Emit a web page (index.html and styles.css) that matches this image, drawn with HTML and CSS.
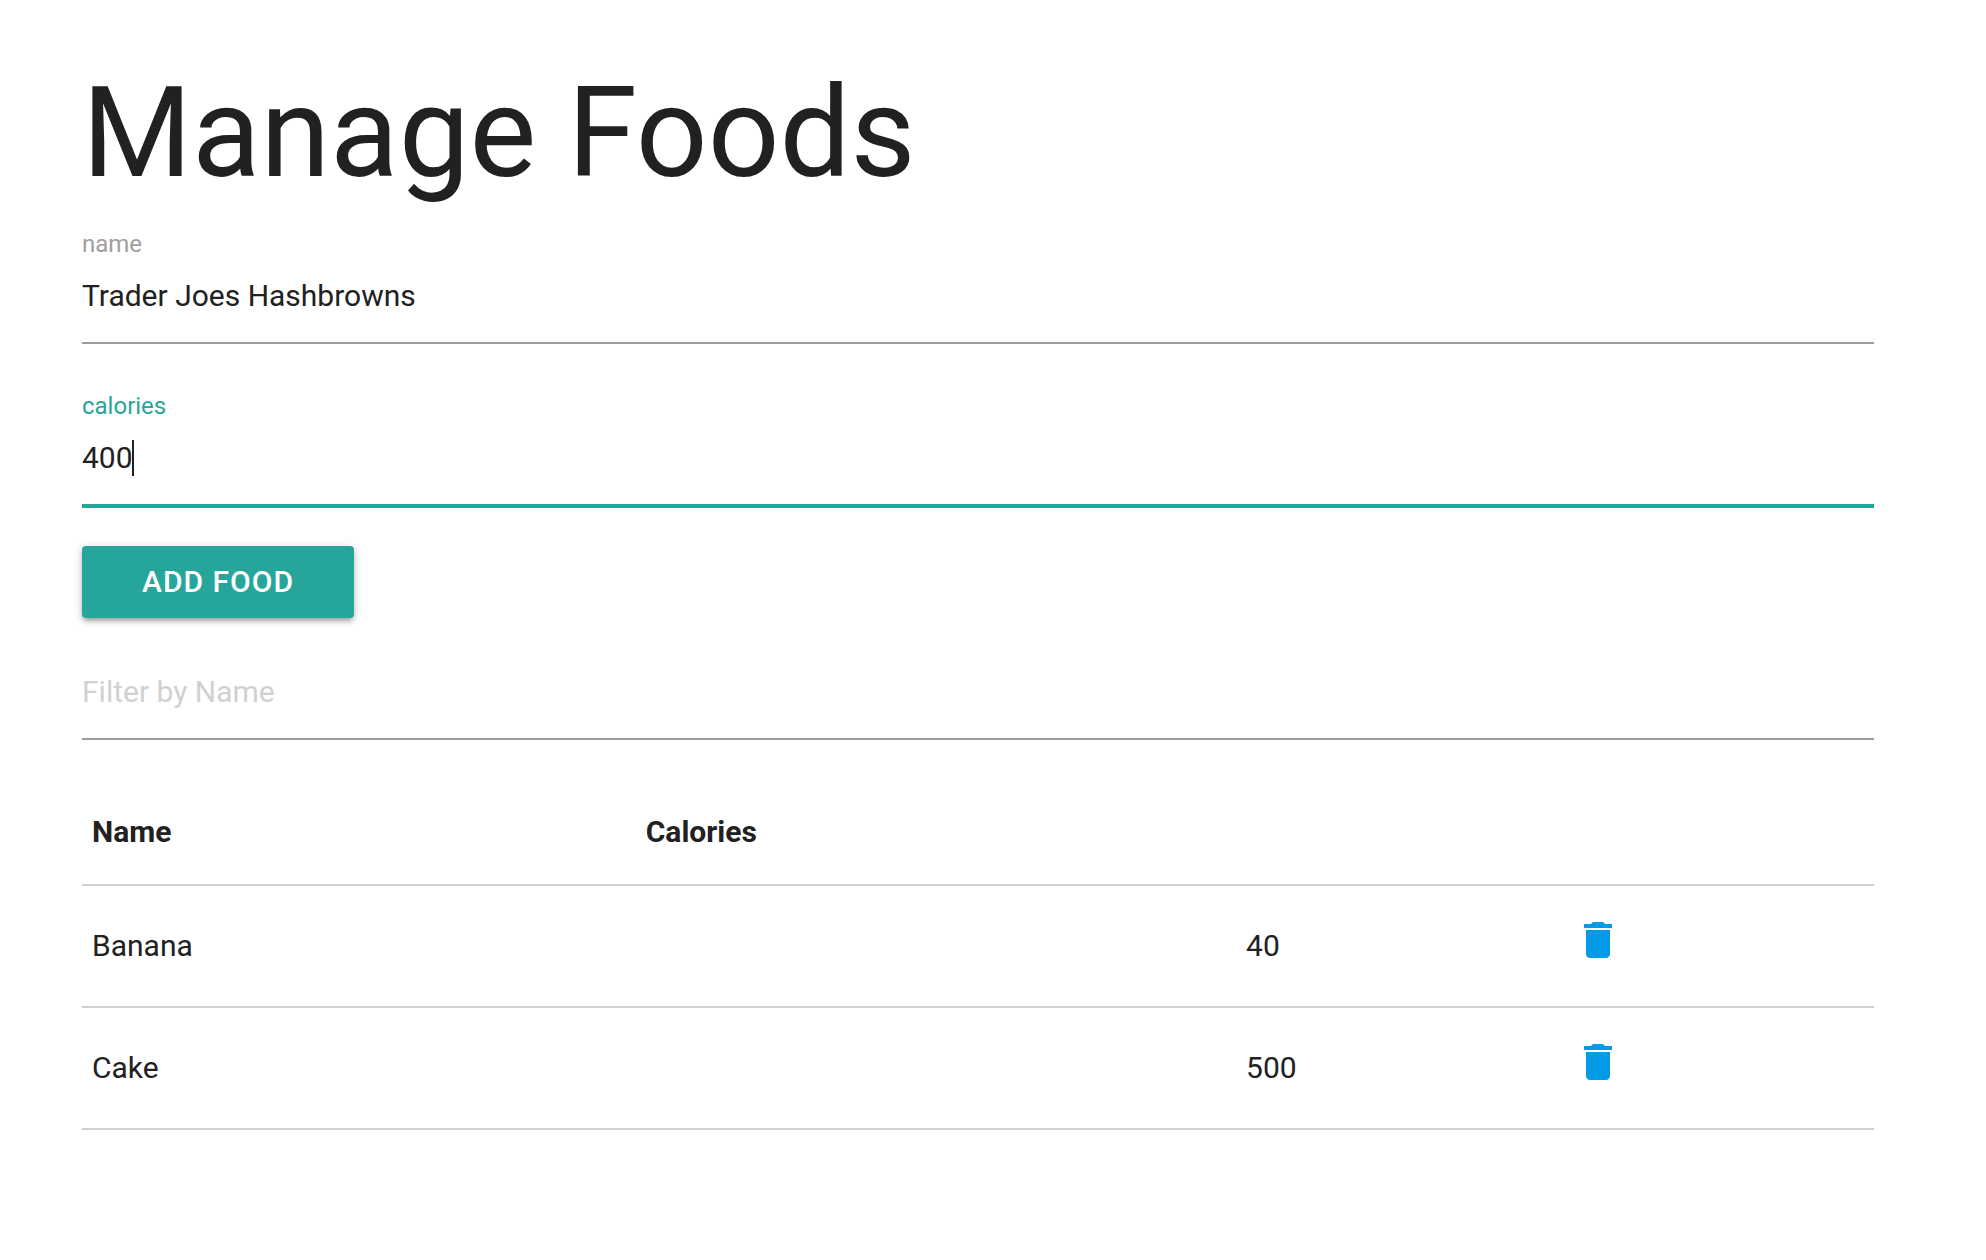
FILE: index.html
```html
<!DOCTYPE html>
<html lang="en">
<head>
  <meta charset="utf-8">
  <meta name="viewport" content="width=device-width, initial-scale=1">
  <title>Manage Foods</title>
  <link rel="stylesheet" href="styles.css">
</head>
<body>
  <main class="page">
    <h1 class="page-title">Manage Foods</h1>

    <form class="food-form">
      <div class="field">
        <label class="field-label" for="name">name</label>
        <input class="field-input" id="name" type="text" value="Trader Joes Hashbrowns">
      </div>
      <div class="field field-active">
        <label class="field-label" for="calories">calories</label>
        <input class="field-input" id="calories" type="text" inputmode="numeric" value="400">
        <span class="caret" aria-hidden="true"></span>
      </div>
      <button class="btn" type="button">Add Food</button>
    </form>

    <input class="field-input filter" type="text" placeholder="Filter by Name" aria-label="Filter by Name">

    <table class="foods">
      <colgroup>
        <col class="col-name">
        <col class="col-label">
        <col class="col-amount">
        <col class="col-action">
      </colgroup>
      <thead>
        <tr><th scope="col">Name</th><th scope="col" colspan="3">Calories</th></tr>
      </thead>
      <tbody>
        <tr>
          <td>Banana</td>
          <td></td>
          <td>40</td>
          <td>
            <a class="delete" href="#" aria-label="Delete Banana">
              <svg class="icon" viewBox="0 0 24 24" aria-hidden="true"><path d="M6 19c0 1.1.9 2 2 2h8c1.1 0 2-.9 2-2V7H6v12zM19 4h-3.5l-1-1h-5l-1 1H5v2h14V4z"/></svg>
            </a>
          </td>
        </tr>
        <tr>
          <td>Cake</td>
          <td></td>
          <td>500</td>
          <td>
            <a class="delete" href="#" aria-label="Delete Cake">
              <svg class="icon" viewBox="0 0 24 24" aria-hidden="true"><path d="M6 19c0 1.1.9 2 2 2h8c1.1 0 2-.9 2-2V7H6v12zM19 4h-3.5l-1-1h-5l-1 1H5v2h14V4z"/></svg>
            </a>
          </td>
        </tr>
      </tbody>
    </table>
  </main>
</body>
</html>
```
FILE: styles.css
```css
* {
  box-sizing: border-box;
}

body {
  margin: 0;
  background: #fff;
  color: #212121;
  font-family: Roboto, "Liberation Sans", sans-serif;
  font-size: 30px;
  line-height: 44px;
}

.page {
  padding: 64px 112px 64px 82px;
}

.page-title {
  margin: 0 0 28px;
  font-size: 126px;
  font-weight: 400;
  line-height: 138px;
}

.food-form {
  margin-bottom: 36px;
}

.field {
  position: relative;
  margin-bottom: 48px;
}

.field-label {
  display: block;
  color: #9e9e9e;
  font-size: 24px;
  line-height: 28px;
}

.field-input {
  display: block;
  width: 100%;
  height: 86px;
  margin: 0;
  padding: 0 0 10px;
  border: 0;
  border-bottom: 2px solid #9e9e9e;
  border-radius: 0;
  outline: 0;
  background: transparent;
  color: inherit;
  font: inherit;
}

.field-input::placeholder {
  color: #d1d1d1;
  opacity: 1;
}

.field-active {
  margin-bottom: 38px;
}

.field-active .field-label {
  color: #26a69a;
}

.field-active .field-input {
  height: 88px;
  border-bottom: 4px solid #26a69a;
}

.caret {
  position: absolute;
  top: 48px;
  left: 50px;
  width: 2px;
  height: 36px;
  background: #212121;
}

.btn {
  display: block;
  height: 72px;
  padding: 0 60px;
  border: 0;
  border-radius: 4px;
  background: #26a69a;
  box-shadow: 0 4px 4px rgba(0, 0, 0, 0.14), 0 6px 2px -4px rgba(0, 0, 0, 0.12), 0 2px 10px rgba(0, 0, 0, 0.2);
  color: #fff;
  font: inherit;
  font-weight: 500;
  letter-spacing: 1px;
  text-transform: uppercase;
  cursor: pointer;
}

.filter {
  margin-bottom: 40px;
}

.foods {
  width: 100%;
  border-spacing: 0;
  table-layout: fixed;
}

.col-name {
  width: 30.9%;
}

.col-label {
  width: 33.5%;
}

.col-amount {
  width: 18.3%;
}

.foods th,
.foods td {
  padding: 30px 10px;
  border-bottom: 2px solid #d0d0d0;
  text-align: left;
  vertical-align: middle;
}

.foods th {
  font-weight: 700;
}

.delete {
  display: block;
  width: 48px;
  padding-bottom: 12px;
  color: #039be5;
}

.icon {
  display: block;
  width: 48px;
  height: 48px;
  fill: currentColor;
}
```
